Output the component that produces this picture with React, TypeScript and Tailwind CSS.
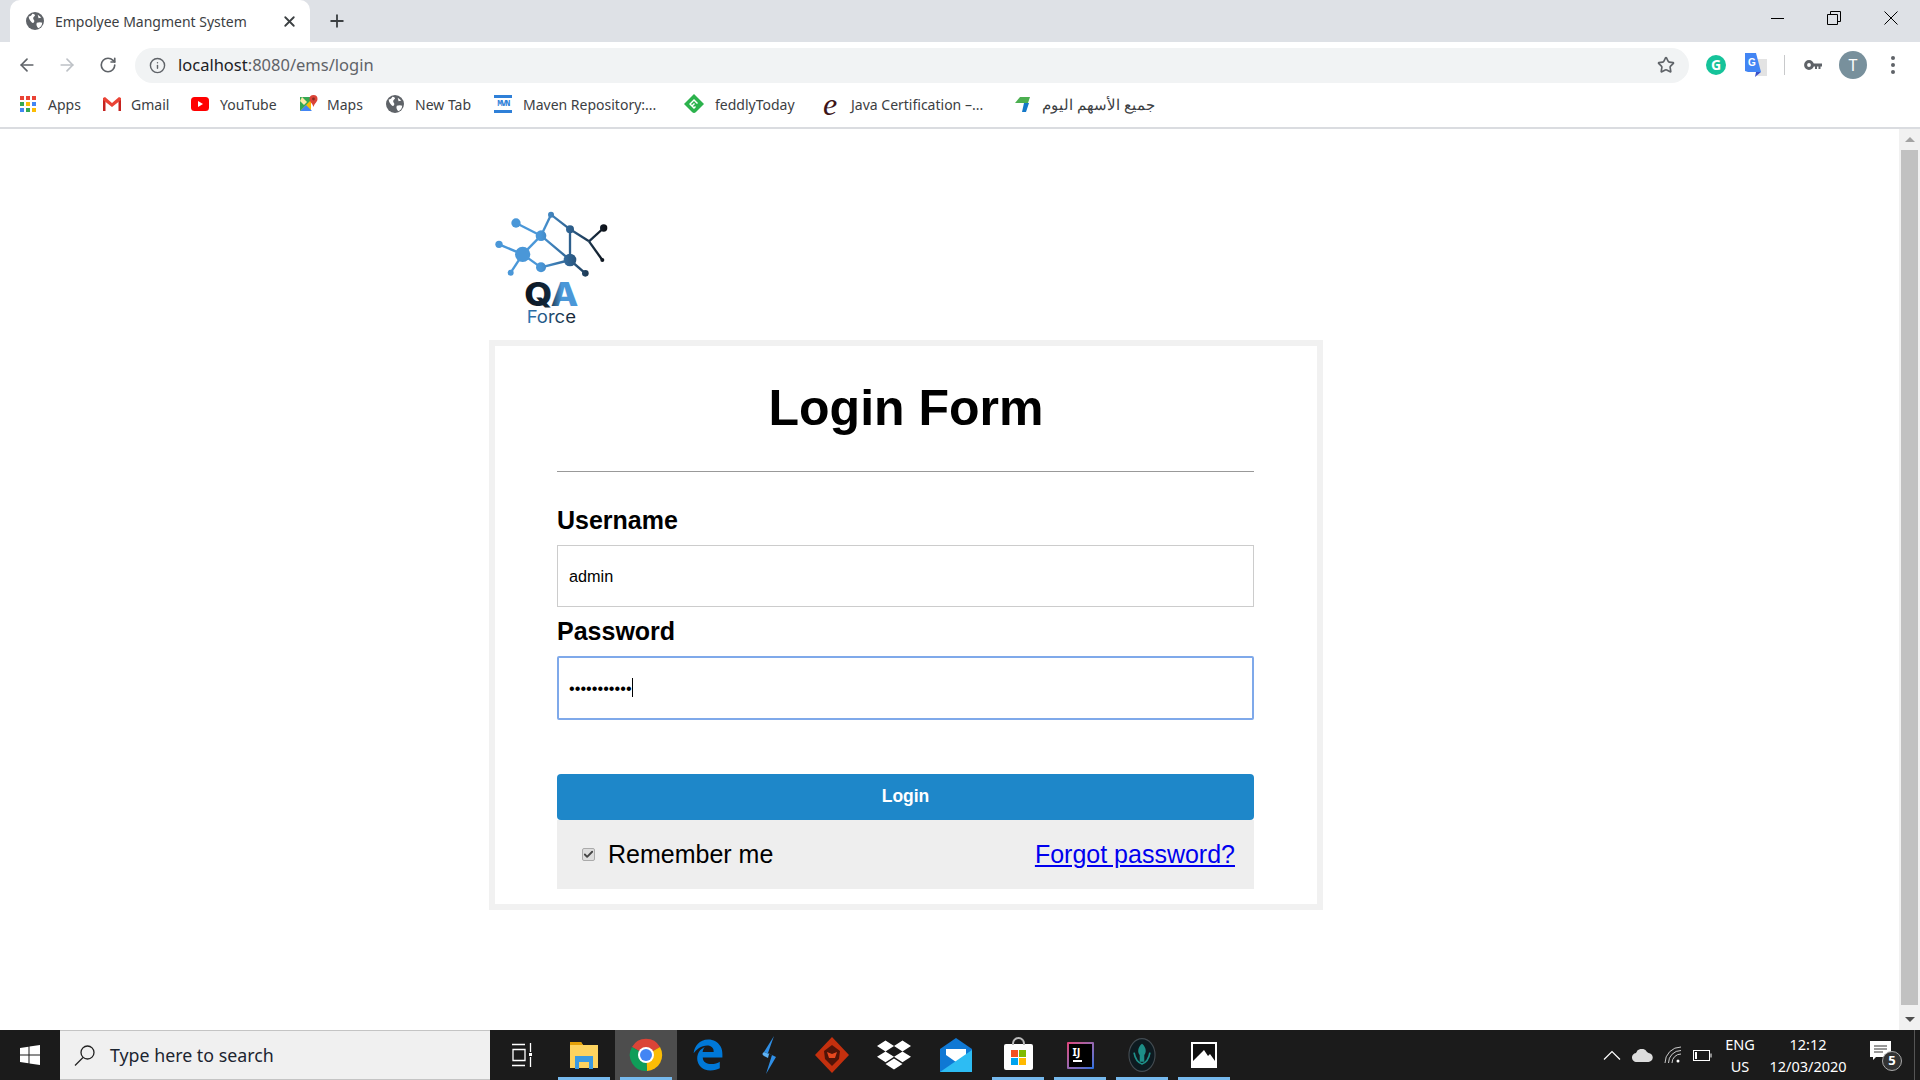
import { ArrowLeft, ArrowRight, Check, Info, Plus, RotateCw, Star, X } from 'lucide-react';
import { FaDropbox, FaEdgeLegacy } from 'react-icons/fa';
import type { ReactNode } from 'react';

const UI_FONT = "font-['Noto_Sans','Open_Sans',sans-serif]";
const PAGE_FONT = "font-['Liberation_Sans',Arial,sans-serif]";

function Globe({ size = 18 }: { size?: number }) {
  return (
    <svg width={size} height={size} viewBox="0 0 20 20">
      <circle cx="10" cy="10" r="10" fill="#5f6368" />
      <path d="M3 5c2 0 3-1 4-3 2 0 3 1 3 2s-2 1-2 3 2 2 1 4-2 1-3 0-3-3-3-6zM12 12c2-1 5-1 6 0 0 3-2 5-4 6-2-1-3-4-2-6zM13 3l4 3-3 1z" fill="#fff" />
    </svg>
  );
}

function AppsIcon() {
  const colors = ['#ea4335', '#ea4335', '#ea4335', '#34a853', '#fbbc05', '#4285f4', '#4285f4', '#34a853', '#fbbc05'];
  return (
    <div className="grid w-4 grid-cols-3 gap-[2px]">
      {colors.map((c, i) => (
        <span key={i} className="h-1 w-1" style={{ background: c }} />
      ))}
    </div>
  );
}

function GmailIcon() {
  return (
    <svg width="18" height="14" viewBox="0 0 18 14">
      <path d="M0 1h2.500v13H0z" fill="#c5221f" />
      <path d="M15.500 1H18v13h-2.500z" fill="#c5221f" />
      <path d="M0 1l2-1 7 6 7-6 2 1v2l-9 7-9-7z" fill="#ea4335" />
    </svg>
  );
}

function YoutubeIcon() {
  return (
    <svg width="18" height="14" viewBox="0 0 18 14">
      <rect width="18" height="14" rx="3.500" fill="#f00" />
      <path d="M7 4l5 3-5 3z" fill="#fff" />
    </svg>
  );
}

function MapsIcon() {
  return (
    <svg width="18" height="18" viewBox="0 0 18 18">
      <path d="M0 2h11v14H0z" fill="#34a853" />
      <path d="M0 16l11-11v11z" fill="#fbbc05" />
      <path d="M0 16l6-6 6 6z" fill="#4285f4" />
      <path d="M2 2l5 5-3 3-4-4z" fill="#ffe9a8" />
      <path d="M13.500 0a4 4 0 014 4c0 3-3 4-4 8-1-4-4-5-4-8a4 4 0 014-4z" fill="#db4437" />
      <circle cx="13.500" cy="4" r="1.400" fill="#8c2b22" />
    </svg>
  );
}

function MvnIcon() {
  return (
    <div className="flex h-[18px] w-[18px] flex-col justify-between">
      <span className="h-[3px] bg-[#2f80d8]" />
      <span className="text-center font-['Liberation_Mono',monospace] text-[9px] leading-[10px] font-bold tracking-[-1.5px] text-[#2f80d8]">MVN</span>
      <span className="h-[3px] bg-[#2f80d8]" />
    </div>
  );
}

function FeedlyIcon() {
  return (
    <svg width="20" height="20" viewBox="0 0 20 20">
      <path d="M10 0l10 10-8 8a3 3 0 01-4 0l-8-8z" fill="#2bb24c" />
      <path d="M10 5l4 4-1 1-3-3-3 3 1 1 2-2 1 1-2 2 1 1 1-1 1 1-2 2-5-5z" fill="#fff" />
    </svg>
  );
}

function JavaIcon() {
  return <span className="ml-[5px] font-['Liberation_Serif',serif] text-[32px] leading-none text-[#3d1418] italic">e</span>;
}

function StocksIcon() {
  return (
    <svg width="16" height="16" viewBox="0 0 16 16">
      <path d="M5 1h10l-2 6H0z" fill="#4caf50" />
      <path d="M9 7h5l-3 9H7z" fill="#1478c8" />
    </svg>
  );
}

const BOOKMARKS: { label: string; icon: ReactNode; box: string; gap: string; text?: string }[] = [
  { label: 'Apps', icon: <AppsIcon />, box: 'w-[83px]', gap: 'w-7' },
  { label: 'Gmail', icon: <GmailIcon />, box: 'w-[88px]', gap: 'w-7' },
  { label: 'YouTube', icon: <YoutubeIcon />, box: 'w-[109px]', gap: 'w-[29px]' },
  { label: 'Maps', icon: <MapsIcon />, box: 'w-[86px]', gap: 'w-[27px]' },
  { label: 'New Tab', icon: <Globe size={18} />, box: 'w-[108px]', gap: 'w-[29px]' },
  { label: 'Maven Repository:...', icon: <MvnIcon />, box: 'w-[190px]', gap: 'w-[29px]' },
  { label: 'feddlyToday', icon: <FeedlyIcon />, box: 'w-[134px]', gap: 'w-[31px]' },
  { label: 'Java Certification –...', icon: <JavaIcon />, box: 'w-[197px]', gap: 'w-[33px]' },
  { label: 'جميع الأسهم اليوم', icon: <StocksIcon />, box: 'w-[160px]', gap: 'w-[27px]', text: 'text-[15px]' },
];

function TabStrip() {
  return (
    <div className="flex h-[42px] items-end bg-[#dee1e6] pl-[10px]">
      <div className="flex h-[42px] w-[300px] items-center rounded-t-[10px] bg-white pr-[12px] pl-[16px]">
        <Globe />
        <span className="ml-[11px] flex-1 text-[14px] text-[#3c4043]">Empolyee Mangment System</span>
        <X size={17} strokeWidth={2.6} className="text-[#3c4043]" />
      </div>
      <div className="ml-[17px] flex h-[42px] items-center">
        <Plus size={20} strokeWidth={2.2} className="text-[#3c4043]" />
      </div>
      <div className="ml-auto flex h-[42px] items-start">
        <div className="flex h-[36px] w-[56px] items-center justify-center pr-[2px]">
          <span className="h-px w-[13px] bg-black" />
        </div>
        <div className="flex h-[36px] w-[56px] items-center justify-center">
          <svg width="14" height="14" viewBox="0 0 14 14" fill="none" stroke="#000">
            <path d="M.5 3.500h10v10H.5zM3.500 3V.5h10v10H11" />
          </svg>
        </div>
        <div className="flex h-[36px] w-[58px] items-center justify-center">
          <svg width="14" height="14" viewBox="0 0 14 14" fill="none" stroke="#000">
            <path d="M.5.5l13 13M13.500.5l-13 13" />
          </svg>
        </div>
      </div>
    </div>
  );
}

function Toolbar() {
  return (
    <div className="flex h-[42px] items-center bg-white pt-[4px]">
      <ArrowLeft size={20} strokeWidth={2} className="ml-[17px] text-[#5f6368]" />
      <ArrowRight size={20} strokeWidth={2} className="ml-[20px] text-[#bdc1c6]" />
      <RotateCw size={18} strokeWidth={2.2} className="ml-[22px] text-[#5f6368]" />
      <div className="ml-[18px] flex h-[35px] w-[1554px] items-center rounded-full bg-[#f1f3f4] pr-[14px] pl-[14px]">
        <Info size={17} strokeWidth={2} className="text-[#5f6368]" />
        <span className="ml-[12px] flex-1 text-[16.5px] text-[#5f6368]">
          <span className="text-[#202124]">localhost</span>:8080/ems/login
        </span>
        <Star size={18} strokeWidth={2.2} className="text-[#5f6368]" />
      </div>
      <span className="ml-[17px] flex h-5 w-5 items-center justify-center rounded-full bg-[#15c39a]">
        <span className="text-[14px] leading-none font-bold text-white">G</span>
      </span>
      <svg width="22" height="24" viewBox="0 0 22 24" className="ml-[19px]">
        <path d="M9 6h13v17H12z" fill="#e3e3e3" />
        <path d="M0 0h11l5 19H3l-3-1z" fill="#4285f4" />
        <path d="M11 19l-1 5 6-5z" fill="#3a50c8" />
        <text x="3" y="13" fontSize="10" fontWeight="700" fill="#fff" fontFamily="Liberation Sans">G</text>
      </svg>
      <span className="ml-[17px] h-5 w-px bg-[#c8c9cb]" />
      <svg width="18" height="10" viewBox="0 0 18 10" className="ml-[19px]">
        <circle cx="5" cy="5" r="3.400" fill="none" stroke="#5f6368" strokeWidth="3" />
        <path d="M8 3.500h10v3h-1.500V9h-2V6.500H13V9h-2V6.500H8z" fill="#5f6368" />
      </svg>
      <span className="ml-[17px] flex h-7 w-7 items-center justify-center rounded-full bg-[#78909c] text-[16px] text-white">T</span>
      <div className="ml-[24px] flex flex-col gap-[3px]">
        <span className="h-1 w-1 rounded-full bg-[#5f6368]" />
        <span className="h-1 w-1 rounded-full bg-[#5f6368]" />
        <span className="h-1 w-1 rounded-full bg-[#5f6368]" />
      </div>
    </div>
  );
}

function BookmarkBar() {
  return (
    <div className="flex h-[45px] items-center border-b-2 border-[#dadce0] bg-white pb-[3px] pl-[20px]">
      {BOOKMARKS.map((b) => (
        <div key={b.label} className={`flex items-center ${b.box}`}>
          <div className={`flex items-center ${b.gap}`}>{b.icon}</div>
          <span className={`whitespace-nowrap text-[#3c4043] ${b.text ?? 'text-[14px]'}`}>{b.label}</span>
        </div>
      ))}
    </div>
  );
}

function Logo() {
  const edges = [
    [128, 163, 57, 133], [128, 163, 183, 107], [128, 163, 92, 218], [128, 163, 183, 202],
    [108, 69, 183, 107], [183, 202, 270, 180], [183, 107, 270, 180], [183, 107, 213, 44],
    [213, 44, 270, 88], [270, 88, 270, 180], [270, 88, 327, 124], [327, 124, 371, 84],
    [327, 124, 367, 180], [270, 180, 316, 220],
  ];
  const nodes = [
    [128, 163, 23], [183, 107, 16], [108, 69, 14], [57, 133, 11], [92, 218, 9], [183, 202, 15],
    [213, 44, 9], [270, 88, 12], [270, 180, 19], [316, 220, 10], [371, 84, 11], [367, 180, 6],
  ];
  return (
    <svg width="120" height="140" viewBox="27 0 360 420">
      <defs>
        <linearGradient id="net" gradientUnits="userSpaceOnUse" x1="180" y1="0" x2="380" y2="0">
          <stop offset="0" stopColor="#4a97d8" />
          <stop offset="0.5" stopColor="#2b5a85" />
          <stop offset="1" stopColor="#0c0f14" />
        </linearGradient>
        <linearGradient id="qa" gradientUnits="userSpaceOnUse" x1="140" y1="0" x2="290" y2="0">
          <stop offset="0" stopColor="#0c1520" />
          <stop offset="0.45" stopColor="#12283c" />
          <stop offset="0.7" stopColor="#4a97d8" />
          <stop offset="1" stopColor="#4a97d8" />
        </linearGradient>
        <linearGradient id="force" gradientUnits="userSpaceOnUse" x1="140" y1="0" x2="290" y2="0">
          <stop offset="0" stopColor="#2e77b5" />
          <stop offset="1" stopColor="#16202c" />
        </linearGradient>
      </defs>
      {edges.map(([a, b, c, d], i) => (
        <path key={i} d={`M${a} ${b}L${c} ${d}`} stroke="url(#net)" strokeWidth="7" />
      ))}
      {nodes.map(([x, y, r], i) => (
        <circle key={i} cx={x} cy={y} r={r} fill="url(#net)" />
      ))}
      <text x="133" y="319" textLength="162" lengthAdjust="spacingAndGlyphs" fontFamily="Inter, sans-serif" fontSize="96" fontWeight="800" fill="url(#qa)">QA</text>
      <text x="140" y="370" textLength="148" lengthAdjust="spacingAndGlyphs" fontFamily="Inter, sans-serif" fontSize="50" fill="url(#force)">Force</text>
    </svg>
  );
}

function LoginCard() {
  return (
    <div className={`w-[834px] border-[6px] border-[#f1f1f1] bg-white pt-[27px] pb-[15px] text-black ${PAGE_FONT}`}>
      <h1 className="text-center text-[50px] leading-[70px] font-bold">Login Form</h1>
      <div className="mr-[63px] ml-[62px]">
        <hr className="mt-[28px] border-t border-[#999]" />
        <label className="mt-[33px] block text-[25px] leading-[30px] font-bold">Username</label>
        <input
          type="text"
          readOnly
          value="admin"
          className="mt-[10px] block h-[62px] w-full border border-[#ccc] px-[11px] text-[16.25px] outline-none"
        />
        <label className="mt-[9px] block text-[25px] leading-[30px] font-bold">Password</label>
        <div className="relative mt-[10px]">
          <input
            type="password"
            readOnly
            value="admin123456"
            className="block h-[64px] w-full rounded-[2px] border-2 border-[#7fa9ea] px-[10px] text-[16.25px] outline-none"
          />
          <span className="absolute top-[22px] left-[75px] h-[19px] w-px bg-black" />
        </div>
        <button type="button" className="mt-[54px] block h-[46px] w-full rounded-[4px] bg-[#1e87c9] pb-[2px] text-[17.5px] font-bold text-white">
          Login
        </button>
        <div className="flex h-[69px] items-center justify-between bg-[#eeeeee] pr-[19px] pl-[25px]">
          <label className="flex items-center text-[25px]">
            <span className="flex h-[13px] w-[13px] items-center justify-center rounded-[2px] border border-[#aaa] bg-[#ddd]">
              <Check size={11} strokeWidth={4} className="text-[#444]" />
            </span>
            <span className="ml-[13px]">Remember me</span>
          </label>
          <a href="#" className="text-[25px] text-[#0000ee] underline">Forgot password?</a>
        </div>
      </div>
    </div>
  );
}

function Scrollbar() {
  return (
    <div className="flex w-[21px] flex-col items-center bg-[#f1f1f1] pt-[8px] pb-[8px]">
      <span className="h-0 w-0 border-x-[5px] border-b-[5px] border-x-transparent border-b-[#a3a3a3]" />
      <span className="mt-[8px] w-[17px] flex-1 bg-[#c1c1c1]" />
      <span className="mt-[12px] h-0 w-0 border-x-[5px] border-t-[5px] border-x-transparent border-t-[#505050]" />
    </div>
  );
}

function ChromeIcon() {
  return (
    <svg width="34" height="34" viewBox="0 0 34 34">
      <path d="M17 17L3 9a16 16 0 0128 0z" fill="#db4437" />
      <path d="M17 17L31 9a16 16 0 01-13 24z" fill="#fbbc05" />
      <path d="M17 17l1 16A16 16 0 013 9z" fill="#0f9d58" />
      <circle cx="17" cy="17" r="8" fill="#fff" />
      <circle cx="17" cy="17" r="6" fill="#4285f4" />
    </svg>
  );
}

const TASK_ICONS: { icon: ReactNode; bar?: string; active?: boolean }[] = [
  {
    icon: (
      <svg width="20" height="24" viewBox="0 0 20 24" fill="none" stroke="#fff" strokeWidth="1.300">
        <path d="M0 1.500h13M0 22.500h13M1 6.500h12v11H1zM18.500 0v9M18.500 14v10" />
        <rect x="17" y="10" width="3" height="3" fill="#fff" stroke="none" />
      </svg>
    ),
  },
  {
    icon: (
      <svg width="28" height="28" viewBox="0 0 28 28">
        <path d="M0 1h11l2 3h15v23H0z" fill="#fdd35f" />
        <path d="M0 1h11l2 3H0z" fill="#e3a008" />
        <path d="M5 15h18v13h-4v-7H9v7H5z" fill="#3b9ae1" />
      </svg>
    ),
    bar: 'bg-[#76b9ed]',
  },
  { icon: <ChromeIcon />, bar: 'bg-[#76b9ed]', active: true },
  { icon: <FaEdgeLegacy size={32} className="text-[#0078d7]" /> },
  {
    icon: (
      <svg width="16" height="38" viewBox="0 0 16 38">
        <path d="M12 0L2 16l8 3-6 19 10-17-8-4z" fill="#2f8fe6" />
        <path d="M2 16c-2 1-2 3 0 4l4 2 1-4z" fill="#5db2f5" />
      </svg>
    ),
  },
  {
    icon: (
      <svg width="34" height="36" viewBox="0 0 34 36">
        <path d="M17 0l17 18-17 18L0 18z" fill="#c4300e" />
        <path d="M17 8l8 6-1 8-7 7-7-7-1-8z" fill="#501408" />
        <path d="M12 15l5 2 5-2-2 6h-6z" fill="#e5481f" />
      </svg>
    ),
  },
  { icon: <FaDropbox size={34} className="text-white" /> },
  {
    icon: (
      <svg width="32" height="34" viewBox="0 0 32 34">
        <path d="M16 0l16 11v23H0V11z" fill="#0f78d4" />
        <path d="M6 11h20v6l-10 7-10-7z" fill="#fff" />
        <path d="M0 34l32-22v22z" fill="#2dbcf3" />
      </svg>
    ),
  },
  {
    icon: (
      <div className="relative mt-[4px] flex h-[26px] w-[29px] items-center justify-center rounded-[2px] bg-white">
        <span className="absolute -top-[7px] h-[8px] w-[13px] rounded-t-full border-2 border-b-0 border-[#bbb]" />
        <div className="grid grid-cols-2 gap-px">
          <span className="h-[7px] w-[7px] bg-[#f25022]" />
          <span className="h-[7px] w-[7px] bg-[#7fba00]" />
          <span className="h-[7px] w-[7px] bg-[#00a4ef]" />
          <span className="h-[7px] w-[7px] bg-[#ffb900]" />
        </div>
      </div>
    ),
    bar: 'bg-[#76b9ed]',
  },
  {
    icon: (
      <div className="rounded-[1px] bg-gradient-to-br from-[#e0407a] to-[#1c6fe0] p-[2px]">
        <div className="flex h-[23px] w-[23px] flex-col bg-black px-[4px] pt-[2px]">
          <span className="text-[11px] leading-[12px] font-bold text-white">IJ</span>
          <span className="mt-[2px] h-[2px] w-[9px] bg-white" />
        </div>
      </div>
    ),
    bar: 'bg-[#76b9ed]',
  },
  {
    icon: (
      <svg width="28" height="34" viewBox="0 0 24 30">
        <ellipse cx="12" cy="15" rx="11.500" ry="14.500" fill="#0d1a20" stroke="#444c52" />
        <path d="M12 5c4 3 4 8 2 10v6h-4v-6C8 13 8 8 12 5z" fill="#1d8f88" />
        <path d="M5 13c1 6 4 9 7 10 3-1 6-4 7-10" fill="none" stroke="#1d8f88" strokeWidth="1.500" />
      </svg>
    ),
    bar: 'bg-[#76b9ed]',
  },
  {
    icon: (
      <svg width="26" height="26" viewBox="0 0 26 26">
        <rect width="26" height="26" fill="#fff" />
        <path d="M2 2h22v17l-5-7-2 2-4-6-6 6-5 5z" fill="#111" />
      </svg>
    ),
    bar: 'bg-[#76b9ed]',
  },
];

function Taskbar() {
  return (
    <div className={`flex h-[50px] items-stretch bg-[#1b1b1b] text-white ${UI_FONT}`}>
      <div className="flex w-[60px] items-center justify-center">
        <svg width="20" height="20" viewBox="0 0 20 20" fill="#fff">
          <path d="M0 3l8.500-1.200v7.700H0zM9.500 1.600L20 0v9.500H9.500zM0 10.500h8.500v7.700L0 17zM9.500 10.500H20V20l-10.500-1.600z" />
        </svg>
      </div>
      <div className="flex w-[430px] items-center border-y border-[#c4c4c4] bg-[#f0f0f0] pl-[14px] text-[#1c2530]">
        <svg width="22" height="22" viewBox="0 0 22 22" fill="none" stroke="#222" strokeWidth="1.300">
          <circle cx="13.500" cy="8.500" r="6.500" />
          <path d="M9 13.500L1 21.500" />
        </svg>
        <span className="ml-[14px] text-[17.8px]">Type here to search</span>
      </div>
      <div className="ml-[1px] flex">
        {TASK_ICONS.map((t, i) => (
          <div key={i} className={`relative flex w-[62px] items-center justify-center ${t.active ? 'bg-[#4d4d4d]' : ''}`}>
            {t.icon}
            {t.bar && <span className={`absolute right-[5px] bottom-0 left-[5px] h-[3px] ${t.bar}`} />}
          </div>
        ))}
      </div>
      <div className="ml-auto flex items-center pr-[5px]">
        <svg width="18" height="10" viewBox="0 0 18 10" fill="none" stroke="#fff" strokeWidth="1.200">
          <path d="M1 9.500l8-8 8 8" />
        </svg>
        <svg width="21" height="13" viewBox="0 0 21 13" fill="#ddd" className="ml-[11px]">
          <path d="M5 13a4.500 4.500 0 01-1-9 6 6 0 0111-1 4.500 4.500 0 011.500 1A4.500 4.500 0 0116 13z" />
        </svg>
        <svg width="18" height="18" viewBox="0 0 18 18" fill="none" stroke="#ccc" className="ml-[11px]">
          <path d="M1 17a16 16 0 0116-16M4.500 17A12.500 12.500 0 0117 4.500M8 17a9 9 0 019-9" />
          <circle cx="14" cy="15" r="1.500" fill="#fff" stroke="none" />
        </svg>
        <svg width="19" height="11" viewBox="0 0 19 11" fill="none" stroke="#fff" className="ml-[11px]">
          <rect x=".5" y=".5" width="16" height="10" />
          <rect x="2" y="2" width="2" height="7" fill="#fff" stroke="none" />
          <path d="M18 3.500v4" />
        </svg>
        <div className="ml-[13px] flex w-[30px] flex-col items-center text-[14.5px] leading-[22px]">
          <span>ENG</span>
          <span>US</span>
        </div>
        <div className="ml-[13px] flex w-[80px] flex-col items-center text-[14.5px] leading-[22px]">
          <span>12:12</span>
          <span>12/03/2020</span>
        </div>
        <div className="relative ml-[22px] h-[28px] w-[30px]">
          <svg width="21" height="20" viewBox="0 0 21 20" className="absolute top-0 left-0">
            <path d="M0 0h21v16H6l-3 3v-3H0z" fill="#fff" />
            <path d="M4 5h13M4 8h13M4 11h9" stroke="#333" />
          </svg>
          <span className="absolute -right-[2px] -bottom-[2px] flex h-5 w-5 items-center justify-center rounded-full border border-[#aaa] bg-[#333] text-[13px] font-bold">5</span>
        </div>
        <span className="ml-[14px] h-[50px] w-px bg-[#555]" />
      </div>
    </div>
  );
}

export default function App() {
  return (
    <div className="flex h-screen flex-col overflow-hidden bg-white">
      <div className={UI_FONT}>
        <TabStrip />
        <Toolbar />
        <BookmarkBar />
      </div>
      <div className="flex min-h-0 flex-1">
        <main className="flex-1 pt-[71px] pl-[489px]">
          <Logo />
          <LoginCard />
        </main>
        <Scrollbar />
      </div>
      <Taskbar />
    </div>
  );
}
